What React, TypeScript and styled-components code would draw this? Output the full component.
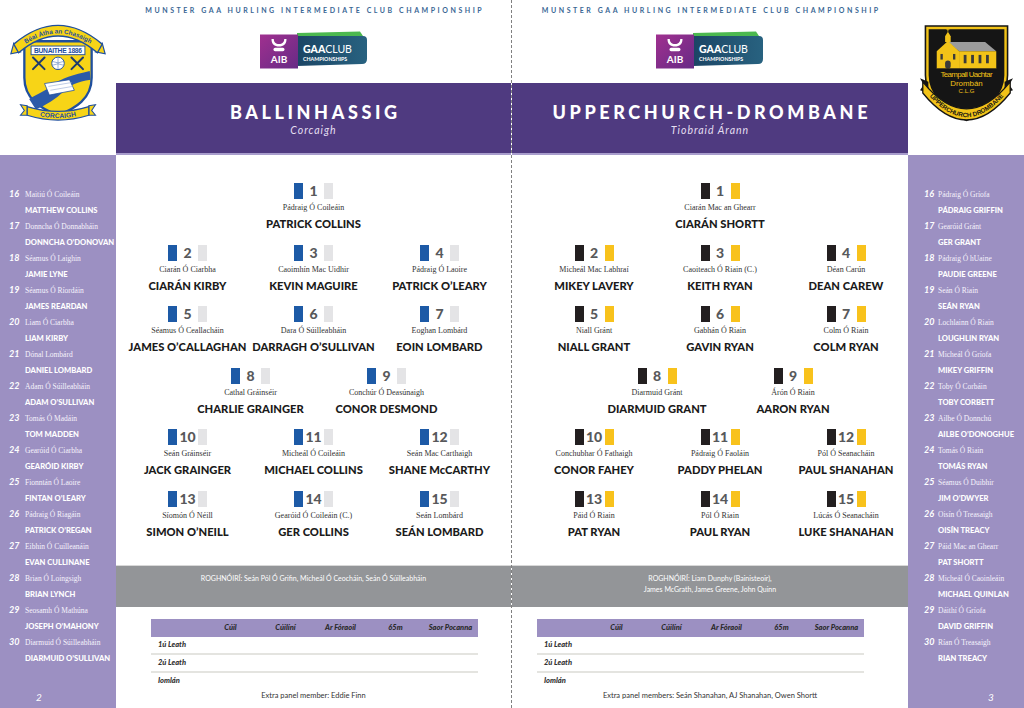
import styled, { createGlobalStyle } from "styled-components";

const GlobalStyle = createGlobalStyle`
  html, body { margin: 0; padding: 0; background: #fff; }
  body {
    width: 1024px;
    height: 708px;
    overflow: hidden;
    font-family: Lato, "Noto Sans", sans-serif;
  }
  * { box-sizing: border-box; }
`;

type Player = { no: number; ga: string; en: string };

type Team = {
  name: string;
  county: string;
  kit: [string, string];
  rows: Player[][];
  subs: Player[];
  selectors: string[];
  extra: string;
  page: number;
};

const p = (no: number, ga: string, en: string): Player => ({ no, ga, en });

const ballinhassig: Team = {
  name: "BALLINHASSIG",
  county: "Corcaigh",
  kit: ["#1d5aa6", "#e4e4e6"],
  rows: [
    [p(1, "Pádraig Ó Coileáin", "PATRICK COLLINS")],
    [
      p(2, "Ciarán Ó Ciarbha", "CIARÁN KIRBY"),
      p(3, "Caoimhín Mac Uidhir", "KEVIN MAGUIRE"),
      p(4, "Pádraig Ó Laoire", "PATRICK O’LEARY"),
    ],
    [
      p(5, "Séamus Ó Ceallacháin", "JAMES O’CALLAGHAN"),
      p(6, "Dara Ó Súilleabháin", "DARRAGH O’SULLIVAN"),
      p(7, "Eoghan Lombárd", "EOIN LOMBARD"),
    ],
    [p(8, "Cathal Gráinséir", "CHARLIE GRAINGER"), p(9, "Conchúr Ó Deasúnaigh", "CONOR DESMOND")],
    [
      p(10, "Seán Gráinséir", "JACK GRAINGER"),
      p(11, "Micheál Ó Coileáin", "MICHAEL COLLINS"),
      p(12, "Seán Mac Carthaigh", "SHANE McCARTHY"),
    ],
    [
      p(13, "Síomón Ó Néill", "SIMON O’NEILL"),
      p(14, "Gearóid Ó Coileáin (C.)", "GER COLLINS"),
      p(15, "Seán Lombárd", "SEÁN LOMBARD"),
    ],
  ],
  subs: [
    p(16, "Maitiú Ó Coileáin", "MATTHEW COLLINS"),
    p(17, "Donncha Ó Donnabháin", "DONNCHA O’DONOVAN"),
    p(18, "Séamus Ó Laighin", "JAMIE LYNE"),
    p(19, "Séamus Ó Ríordáin", "JAMES REARDAN"),
    p(20, "Liam Ó Ciarbha", "LIAM KIRBY"),
    p(21, "Dónal Lombárd", "DANIEL LOMBARD"),
    p(22, "Adam Ó Súilleabháin", "ADAM O’SULLIVAN"),
    p(23, "Tomás Ó Madáin", "TOM MADDEN"),
    p(24, "Gearóid Ó Ciarbha", "GEARÓID KIRBY"),
    p(25, "Fionntán Ó Laoire", "FINTAN O’LEARY"),
    p(26, "Pádraig Ó Riagáin", "PATRICK O’REGAN"),
    p(27, "Eibhin Ó Cuilleanáin", "EVAN CULLINANE"),
    p(28, "Brian Ó Loingsigh", "BRIAN LYNCH"),
    p(29, "Seosamh Ó Mathúna", "JOSEPH O’MAHONY"),
    p(30, "Diarmuid Ó Súilleabháin", "DIARMUID O’SULLIVAN"),
  ],
  selectors: ["ROGHNÓIRÍ: Seán Pól Ó Grifin, Micheál Ó Ceocháin, Seán Ó Súilleabháin"],
  extra: "Extra panel member: Eddie Finn",
  page: 2,
};

const upperchurch: Team = {
  name: "UPPERCHURCH-DROMBANE",
  county: "Tiobraid Árann",
  kit: ["#231f20", "#f8c21c"],
  rows: [
    [p(1, "Ciarán Mac an Ghearr", "CIARÁN SHORTT")],
    [
      p(2, "Micheál Mac Labhraí", "MIKEY LAVERY"),
      p(3, "Caoiteach Ó Riain (C.)", "KEITH RYAN"),
      p(4, "Déan Carún", "DEAN CAREW"),
    ],
    [
      p(5, "Niall Gránt", "NIALL GRANT"),
      p(6, "Gabhán Ó Riain", "GAVIN RYAN"),
      p(7, "Colm Ó Riain", "COLM RYAN"),
    ],
    [p(8, "Diarmuid Gránt", "DIARMUID GRANT"), p(9, "Árón Ó Riain", "AARON RYAN")],
    [
      p(10, "Conchubhar Ó Fathaigh", "CONOR FAHEY"),
      p(11, "Pádraig Ó Faoláin", "PADDY PHELAN"),
      p(12, "Pól Ó Seanacháin", "PAUL SHANAHAN"),
    ],
    [
      p(13, "Páid Ó Riain", "PAT RYAN"),
      p(14, "Pól Ó Riain", "PAUL RYAN"),
      p(15, "Lúcás Ó Seanacháin", "LUKE SHANAHAN"),
    ],
  ],
  subs: [
    p(16, "Pádraig Ó Gríofa", "PÁDRAIG GRIFFIN"),
    p(17, "Gearóid Gránt", "GER GRANT"),
    p(18, "Pádraig Ó hUaine", "PAUDIE GREENE"),
    p(19, "Seán Ó Riain", "SEÁN RYAN"),
    p(20, "Lochlainn Ó Riain", "LOUGHLIN RYAN"),
    p(21, "Micheál Ó Gríofa", "MIKEY GRIFFIN"),
    p(22, "Toby Ó Corbáin", "TOBY CORBETT"),
    p(23, "Ailbe Ó Donnchú", "AILBE O’DONOGHUE"),
    p(24, "Tomás Ó Riain", "TOMÁS RYAN"),
    p(25, "Séamus Ó Duibhir", "JIM O’DWYER"),
    p(26, "Oisín Ó Treasaigh", "OISÍN TREACY"),
    p(27, "Páid Mac an Ghearr", "PAT SHORTT"),
    p(28, "Micheál Ó Caoinleáin", "MICHAEL QUINLAN"),
    p(29, "Dáithí Ó Gríofa", "DAVID GRIFFIN"),
    p(30, "Rían Ó Treasaigh", "RIAN TREACY"),
  ],
  selectors: ["ROGHNÓIRÍ: Liam Dunphy (Bainisteoir),", "James McGrath, James Greene, John Quinn"],
  extra: "Extra panel members: Seán Shanahan, AJ Shanahan, Owen Shortt",
  page: 3,
};

const Spread = styled.div`
  display: flex;
  width: 1024px;
  height: 708px;
`;

const Page = styled.section<{ $divider?: boolean }>`
  display: flex;
  width: 512px;
  height: 708px;
  border-right: ${(props) => (props.$divider ? "1px dashed #808080" : "0")};
`;

const Sidebar = styled.aside`
  display: flex;
  flex-direction: column;
  width: 116px;
  flex: none;
`;

const CrestSlot = styled.div<{ $top: number }>`
  height: 155px;
  display: flex;
  justify-content: center;
  padding-top: ${(props) => props.$top}px;
`;

const SubsPanel = styled.div<{ $indent: number }>`
  flex: 1;
  display: flex;
  flex-direction: column;
  background: #9c90c2;
  padding: 32px 0 0 ${(props) => props.$indent}px;
  color: #fff;
`;

const SubEntry = styled.div`
  height: 32px;
`;

const SubTop = styled.div`
  display: flex;
  align-items: baseline;
  height: 14px;
  line-height: 14px;
  white-space: nowrap;
`;

const SubNo = styled.span<{ $w: number }>`
  width: ${(props) => props.$w}px;
  flex: none;
  font-style: italic;
  font-weight: 700;
  font-size: 9px;
`;

const SubGa = styled.span`
  font-family: "Liberation Serif", serif;
  font-size: 7.5px;
  color: #f6f3fc;
`;

const SubEn = styled.div<{ $w: number }>`
  padding-left: ${(props) => props.$w}px;
  line-height: 18px;
  font-weight: 900;
  font-size: 7.6px;
  white-space: nowrap;
`;

const PageNo = styled.div<{ $x: number }>`
  margin-top: auto;
  padding: 0 0 4px ${(props) => props.$x}px;
  font-style: italic;
  font-size: 10px;
  line-height: 14px;
`;

const Main = styled.main`
  flex: 1;
  min-width: 0;
  display: flex;
  flex-direction: column;
`;

const TopBar = styled.header`
  height: 83px;
  display: flex;
  flex-direction: column;
  align-items: center;
  padding-top: 6px;
`;

const Championship = styled.div`
  font-weight: 700;
  font-size: 7px;
  line-height: 9px;
  letter-spacing: 2.55px;
  padding-left: 2.55px;
  color: #3a6795;
  white-space: nowrap;
`;

const SponsorMark = styled.svg`
  margin-top: 16px;
  width: 110px;
  height: 38px;
`;

const TeamHeader = styled.div`
  height: 72px;
  display: flex;
  flex-direction: column;
  align-items: center;
  padding-top: 18px;
  background: #4f3a80;
  border-bottom: 2px solid #a89dcc;
  color: #fff;
`;

const TeamName = styled.h1`
  margin: 0;
  font-weight: 900;
  font-size: 18px;
  line-height: 22px;
  letter-spacing: 3.6px;
  padding-left: 3.6px;
`;

const County = styled.div`
  font-style: italic;
  font-size: 10.5px;
  line-height: 14px;
  letter-spacing: 1px;
  color: #e4dff1;
`;

const Lineup = styled.div<{ $shift: number }>`
  height: 410px;
  display: flex;
  flex-direction: column;
  align-items: center;
  gap: 13.6px;
  padding: 28px 0 0 ${(props) => props.$shift}px;
`;

const LineRow = styled.div<{ $cols: number }>`
  display: grid;
  grid-template-columns: repeat(${(props) => props.$cols}, ${(props) => (props.$cols === 2 ? 136 : 126)}px);
  padding-left: ${(props) => (props.$cols === 2 ? 10 : 0)}px;
`;

const PlayerCell = styled.div`
  display: flex;
  flex-direction: column;
  align-items: center;
`;

const NumberTag = styled.div`
  display: flex;
  align-items: center;
  height: 16px;
`;

const Swatch = styled.span<{ $c: string }>`
  width: 9px;
  height: 16px;
  background: ${(props) => props.$c};
`;

const Num = styled.span`
  width: 21px;
  text-align: center;
  font-weight: 900;
  font-size: 14px;
  line-height: 16px;
  color: #58595b;
`;

const GaName = styled.div`
  margin-top: 4px;
  height: 10px;
  line-height: 10px;
  font-family: "Liberation Serif", serif;
  font-size: 8px;
  color: #333;
  white-space: nowrap;
`;

const EnName = styled.div`
  margin-top: 4px;
  line-height: 14px;
  font-weight: 900;
  font-size: 11.2px;
  color: #1b1b1b;
  white-space: nowrap;
`;

const Selectors = styled.div`
  height: 42px;
  padding-top: 7px;
  background: #939598;
  border-top: 1px solid #d8d8d8;
  text-align: center;
  color: #fff;
  font-size: 7px;
  line-height: 11px;
`;

const Stats = styled.div<{ $inset: number }>`
  flex: 1;
  padding-top: 12px;
  padding-left: ${(props) => props.$inset}px;
`;

const ScoreTable = styled.div`
  width: 327px;
  display: grid;
  grid-template-columns: 52px repeat(5, 55px);
`;

const HeadCell = styled.div`
  height: 18px;
  line-height: 18px;
  background: #9c90c2;
  text-align: center;
  font-weight: 900;
  font-style: italic;
  font-size: 7.5px;
  color: #2a2a2a;
  white-space: nowrap;
`;

const BodyCell = styled.div<{ $last?: boolean }>`
  height: ${(props) => (props.$last ? 16 : 18)}px;
  line-height: 16px;
  padding-left: 7px;
  border-bottom: ${(props) => (props.$last ? "0" : "2px solid #e4e4e0")};
  font-weight: 900;
  font-style: italic;
  font-size: 7.5px;
  color: #333;
  white-space: nowrap;
`;

const Extra = styled.div<{ $inset: number }>`
  margin-left: -${(props) => props.$inset}px;
  line-height: 14px;
  text-align: center;
  font-size: 7.5px;
  color: #333;
`;

function Sponsor({ id }: { id: string }) {
  return (
    <SponsorMark viewBox="0 0 110 38">
      <defs>
        <linearGradient id={`${id}p`} x1="0" y1="0" x2="1" y2="1">
          <stop offset="0" stopColor="#a0308f" />
          <stop offset="1" stopColor="#672b86" />
        </linearGradient>
        <linearGradient id={`${id}t`} x1="0" y1="0" x2="1" y2="0">
          <stop offset="0" stopColor="#1b4565" />
          <stop offset="1" stopColor="#286280" />
        </linearGradient>
      </defs>
      <path d="M38 2 L101 0.5 L104 5 L38 6 Z" fill="#4cb84f" />
      <path d="M38 5 H104 Q108 5 108 9 V28 Q108 33 103 33 L38 35 Z" fill={`url(#${id}t)`} />
      <rect x="1" y="3.5" width="38" height="34" fill={`url(#${id}p)`} />
      <path
        d="M12.5 8 C12.5 13.5 15.5 15.5 20 15.5 C24.5 15.5 27.5 13.5 27.5 8 L25.2 8 C25.2 11.5 23.2 13 20 13 C16.8 13 14.8 11.5 14.8 8 Z"
        fill="#fff"
      />
      <rect x="14.5" y="16.8" width="11" height="3.4" rx="1.6" fill="#fff" />
      <text x="20" y="32" fontSize="10" fontWeight="700" fill="#fff" textAnchor="middle" fontFamily="Lato, sans-serif">
        AIB
      </text>
      <text x="44" y="21.5" fontSize="10.5" fill="#fff" fontFamily="Lato, sans-serif">
        <tspan fontWeight="900">GAA</tspan>
        <tspan fontWeight="400">CLUB</tspan>
      </text>
      <text x="44" y="29.5" fontSize="5.3" fontWeight="700" fill="#fff" fontFamily="Lato, sans-serif">
        CHAMPIONSHIPS
      </text>
    </SponsorMark>
  );
}

function BallinhassigCrest() {
  const blue = "#1f4f9e";
  const gold = "#f7d417";
  return (
    <svg viewBox="0 0 100 104" width={98} height={100}>
      <path d="M15 20 H85 V58 C85 80 68 90 50 97 C32 90 15 80 15 58 Z" fill={gold} stroke={blue} strokeWidth={2.4} />
      <path d="M1 33 L4 22 L11 31 Z" fill={gold} stroke={blue} strokeWidth={1.2} />
      <path d="M99 33 L96 22 L89 31 Z" fill={gold} stroke={blue} strokeWidth={1.2} />
      <path d="M4 23 Q50 -16 96 23 L91 32 Q50 -3 9 32 Z" fill={gold} stroke={blue} strokeWidth={1.4} />
      <path id="bhArc" d="M6 30.5 Q50 -6.5 94 30.5" fill="none" />
      <text fontSize="6.6" fontWeight="700" fill={blue} fontFamily="Liberation Sans, sans-serif">
        <textPath href="#bhArc" startOffset="50%" textAnchor="middle">
          Béal Átha an Chasaigh
        </textPath>
      </text>
      <rect x="22" y="25" width="56" height="9" fill="#fff" stroke={blue} strokeWidth={1} />
      <text x="50" y="32.3" fontSize="7" fontWeight="700" fill={blue} textAnchor="middle" textLength="50" fontFamily="Liberation Sans, sans-serif">
        BUNAITHE 1886
      </text>
      <g stroke="#1d3a6e" strokeWidth={2.1} strokeLinecap="round">
        <path d="M24 37 L36 49 M36 37 L24 49" />
        <path d="M64 37 L76 49 M76 37 L64 49" />
      </g>
      <circle cx="50" cy="43" r="6.5" fill="#fff" stroke={blue} strokeWidth={1} />
      <path d="M44 41 Q50 44 56 41 M44 45 Q50 42 56 45 M50 36.5 V49.5" stroke="#6b8cc5" strokeWidth={0.7} fill="none" />
      <path
        d="M20 80 C30 74 36 72 44 66 C54 58 66 55 83 51 L84 60 C70 62 62 66 56 72 C48 80 38 86 27 91 Z"
        fill="#2c5aa8"
      />
      <path d="M36 64 L62 60 L67 71 L41 76 Z" fill="#fff" stroke={blue} strokeWidth={0.8} />
      <path d="M40 67 L64 63 M42 71 L65 67" stroke="#9fb3d8" strokeWidth={0.7} />
      <path d="M18 87 L11 86 L15 92 L11 97 L18 97 Z" fill={gold} stroke={blue} strokeWidth={1.1} />
      <path d="M82 87 L89 86 L85 92 L89 97 L82 97 Z" fill={gold} stroke={blue} strokeWidth={1.1} />
      <path d="M18 88 Q50 98 82 88 L82 97 Q50 107 18 97 Z" fill={gold} stroke={blue} strokeWidth={1.3} />
      <path id="bhLow" d="M22 95.5 Q50 104.5 78 95.5" fill="none" />
      <text fontSize="7" fontWeight="700" fill={blue} fontFamily="Liberation Sans, sans-serif">
        <textPath href="#bhLow" startOffset="50%" textAnchor="middle">
          CORCAIGH
        </textPath>
      </text>
    </svg>
  );
}

function UpperchurchCrest() {
  const gold = "#f2c318";
  const shield = "M8 3 H92 V54 Q92 84 50 100 Q8 84 8 54 Z";
  return (
    <svg viewBox="0 0 100 104" width={93} height={97}>
      <path d={shield} fill="#151515" stroke="#151515" strokeWidth={6} />
      <path d={shield} fill="#151515" stroke={gold} strokeWidth={2.6} />
      <path d="M30 18 L70 18 L82 28 L42 28 Z" fill="#9b9b9b" />
      <path d="M42 28 H82 V47 H42 Z" fill={gold} />
      <path d="M18 47 V28 L30 17 L42 28 V47 Z" fill={gold} />
      <path d="M27 18 V12 L30 7 L33 12 V18 Z" fill={gold} />
      <path d="M30 2.5 V7 M28.2 4.2 H31.8" stroke={gold} strokeWidth={0.9} />
      <g fill="#3a3a3a">
        <rect x="47" y="32" width="3" height="9" />
        <rect x="55" y="32" width="3" height="9" />
        <rect x="63" y="32" width="3" height="9" />
        <rect x="71" y="32" width="3" height="9" />
        <rect x="27" y="38" width="6" height="9" rx="3" />
        <rect x="22" y="31" width="2.5" height="6" />
        <rect x="35.5" y="31" width="2.5" height="6" />
      </g>
      <path d="M18 47 H82" stroke="#151515" strokeWidth={1} />
      <g fill={gold} fontFamily="Liberation Sans, sans-serif" textAnchor="middle">
        <text x="50" y="56" fontSize="8.5" textLength="56">
          Teampall Uachtar
        </text>
        <text x="50" y="65.5" fontSize="8.5">
          Drombán
        </text>
        <text x="50" y="73.5" fontSize="6.5">
          C.L.G
        </text>
      </g>
      <path d="M0 57 L9 61 L9 73 L0 70 L4 64 Z" fill="#151515" />
      <path d="M100 57 L91 61 L91 73 L100 70 L96 64 Z" fill="#151515" />
      <path d="M3 61 Q50 119 97 61 L97 73 Q50 131 3 73 Z" fill={gold} stroke="#151515" strokeWidth={1.4} />
      <path id="ucArc" d="M5 70.2 Q50 127.5 95 70.2" fill="none" />
      <text fontSize="6.8" fontWeight="700" fill="#151515" fontFamily="Liberation Sans, sans-serif">
        <textPath href="#ucArc" startOffset="50%" textAnchor="middle">
          UPPERCHURCH DROMBANE
        </textPath>
      </text>
    </svg>
  );
}

function SubsList({ team, indent, numW, pageX }: { team: Team; indent: number; numW: number; pageX: number }) {
  return (
    <SubsPanel $indent={indent}>
      {team.subs.map((s) => (
        <SubEntry key={s.no}>
          <SubTop>
            <SubNo $w={numW}>{s.no}</SubNo>
            <SubGa>{s.ga}</SubGa>
          </SubTop>
          <SubEn $w={numW}>{s.en}</SubEn>
        </SubEntry>
      ))}
      <PageNo $x={pageX}>{team.page}</PageNo>
    </SubsPanel>
  );
}

function TeamSheet({ team, shift, inset, logoId }: { team: Team; shift: number; inset: number; logoId: string }) {
  const [home, away] = team.kit;
  const labels = ["1ú Leath", "2ú Leath", "Iomlán"];
  return (
    <Main>
      <TopBar>
        <Championship>MUNSTER GAA HURLING INTERMEDIATE CLUB CHAMPIONSHIP</Championship>
        <Sponsor id={logoId} />
      </TopBar>
      <TeamHeader>
        <TeamName>{team.name}</TeamName>
        <County>{team.county}</County>
      </TeamHeader>
      <Lineup $shift={shift}>
        {team.rows.map((row, i) => (
          <LineRow key={i} $cols={row.length}>
            {row.map((pl) => (
              <PlayerCell key={pl.no}>
                <NumberTag>
                  <Swatch $c={home} />
                  <Num>{pl.no}</Num>
                  <Swatch $c={away} />
                </NumberTag>
                <GaName>{pl.ga}</GaName>
                <EnName>{pl.en}</EnName>
              </PlayerCell>
            ))}
          </LineRow>
        ))}
      </Lineup>
      <Selectors>
        {team.selectors.map((line) => (
          <div key={line}>{line}</div>
        ))}
      </Selectors>
      <Stats $inset={inset}>
        <ScoreTable>
          {["", "Cúil", "Cúilíní", "Ar Fóraoil", "65m", "Saor Pocanna"].map((h, i) => (
            <HeadCell key={i}>{h}</HeadCell>
          ))}
          {labels.map((label, r) =>
            [label, "", "", "", "", ""].map((c, i) => (
              <BodyCell key={`${r}-${i}`} $last={r === labels.length - 1}>
                {c}
              </BodyCell>
            ))
          )}
        </ScoreTable>
        <Extra $inset={inset}>{team.extra}</Extra>
      </Stats>
    </Main>
  );
}

export default function App() {
  return (
    <>
      <GlobalStyle />
      <Spread>
        <Page $divider>
          <Sidebar>
            <CrestSlot $top={22}>
              <BallinhassigCrest />
            </CrestSlot>
            <SubsList team={ballinhassig} indent={9} numW={16} pageX={27} />
          </Sidebar>
          <TeamSheet team={ballinhassig} shift={0} inset={35} logoId="aibL" />
        </Page>
        <Page>
          <TeamSheet team={upperchurch} shift={20} inset={25} logoId="aibR" />
          <Sidebar>
            <CrestSlot $top={25}>
              <UpperchurchCrest />
            </CrestSlot>
            <SubsList team={upperchurch} indent={16} numW={14} pageX={64} />
          </Sidebar>
        </Page>
      </Spread>
    </>
  );
}
